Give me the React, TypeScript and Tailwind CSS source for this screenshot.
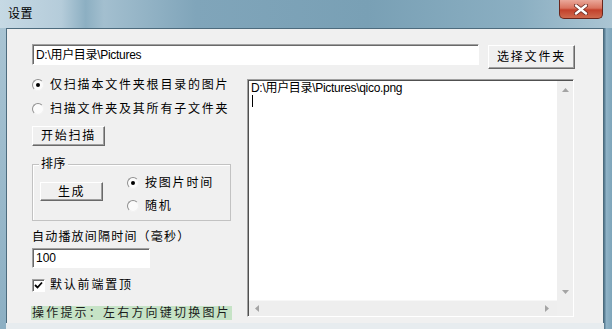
import React from 'react';

const raised =
  'border border-t-white border-l-white border-r-[#696969] border-b-[#696969] shadow-[inset_-1px_-1px_0_#a0a0a0] bg-[#f0f0f0]';
const sunken =
  'border border-t-[#a0a0a0] border-l-[#a0a0a0] border-r-white border-b-white shadow-[inset_1px_1px_0_#696969] bg-white';

function Radio({ checked }: { checked?: boolean }) {
  return (
    <span className="w-[12px] h-[12px] rounded-full border border-t-[#8f8f8f] border-l-[#8f8f8f] border-r-[#f2f2f2] border-b-[#f2f2f2] bg-[#fbfbfb] flex items-center justify-center shrink-0">
      {checked && <span className="w-[4px] h-[4px] rounded-full bg-black" />}
    </span>
  );
}

function RadioRow({ label, checked, className = '' }: { label: string; checked?: boolean; className?: string }) {
  return (
    <div className={`flex items-center h-[12px] gap-[6px] ${className}`}>
      <Radio checked={checked} />
      <span className="text-[12px] leading-[12px] tracking-[1.8px] whitespace-nowrap">{label}</span>
    </div>
  );
}

function Arrow({ dir }: { dir: 'up' | 'down' | 'left' | 'right' }) {
  const pts = {
    up: '0,4 7,4 3.5,0',
    down: '0,0 7,0 3.5,4',
    left: '4,0 4,7 0,3.5',
    right: '0,0 0,7 4,3.5',
  }[dir];
  const vertical = dir === 'up' || dir === 'down';
  return (
    <svg width={vertical ? 7 : 4} height={vertical ? 4 : 7} viewBox={vertical ? '0 0 7 4' : '0 0 4 7'}>
      <polygon points={pts} fill="#a4a4a4" />
    </svg>
  );
}

export default function App() {
  return (
    <div className="w-[612px] h-[329px] flex flex-col overflow-hidden text-black font-['Liberation_Sans','Noto_Sans_CJK_SC',sans-serif]">
      {/* title bar */}
      <div className="h-[28px] flex items-start justify-between bg-[linear-gradient(90deg,#c6d9e4_0%,#b5ccda_10%,#8cafc2_14%,#a3bfcf_17%,#80a5ba_32%,#79a0b5_60%,#8bafc2_85%,#abc5d3_100%)]">
        <span className="pl-[8px] pt-[7px] text-[12px] leading-[14px] tracking-[0.5px]">设置</span>
        <div className="mr-[9px] w-[44px] h-[19px] rounded-b-[5px] border border-t-0 border-[#6a261c] bg-[linear-gradient(180deg,#eaa89a_0%,#d9735f_45%,#c3412b_55%,#cf6a4e_100%)] flex items-center justify-center">
          <svg width="14" height="11" viewBox="0 0 14 11">
            <path d="M2 1.5 L12 9.5 M12 1.5 L2 9.5" stroke="#6a2a22" strokeWidth="4" strokeLinecap="round" />
            <path d="M2 1.5 L12 9.5 M12 1.5 L2 9.5" stroke="#ffffff" strokeWidth="2.4" strokeLinecap="round" />
          </svg>
        </div>
      </div>

      <div className="flex-1 flex min-h-0">
        <div className="w-[6px] bg-[linear-gradient(180deg,#a9c4d3_0%,#8cafc3_100%)]" />
        <div className="flex-1 flex flex-col min-w-0">
          <div className="flex-1 bg-[#f0f0f0] border border-b-0 border-[#4d6b7d] pl-[25px] pr-[28px] pt-[15px]">
            {/* path row */}
            <div className="flex items-start gap-[9px]">
              <div className={`w-[447px] h-[21px] ${sunken} flex items-center pl-[3px] text-[12px] leading-[14px] tracking-[-0.3px]`}>
                D:\用户目录\Pictures
              </div>
              <div className={`w-[87px] h-[24px] mt-[1px] ${raised} flex items-center justify-center text-[12px] tracking-[1.8px]`}>
                选择文件夹
              </div>
            </div>

            <div className="flex gap-[16px] mt-[10px]">
              {/* left column */}
              <div className="w-[199px] flex flex-col">
                <RadioRow label="仅扫描本文件夹根目录的图片" checked className="mt-0" />
                <RadioRow label="扫描文件夹及其所有子文件夹" className="mt-[12px]" />
                <div className={`mt-[11px] w-[73px] h-[20px] ${raised} flex items-center justify-center text-[12px] tracking-[1.8px]`}>
                  开始扫描
                </div>

                <div className="relative mt-[18px] h-[57px] border border-[#c2c2c2] shadow-[inset_1px_1px_0_#ffffff] flex items-start">
                  <span className="absolute -top-[8px] left-[6px] px-[2px] bg-[#f0f0f0] text-[12px] leading-[14px] tracking-[0.5px]">
                    排序
                  </span>
                  <div className={`ml-[7px] mt-[17px] w-[63px] h-[19px] ${raised} flex items-center justify-center text-[12px] tracking-[1.5px]`}>
                    生成
                  </div>
                  <div className="ml-[24px] mt-[12px] flex flex-col">
                    <RadioRow label="按图片时间" checked />
                    <RadioRow label="随机" className="mt-[11px]" />
                  </div>
                </div>

                <div className="mt-[10px] h-[12px] flex items-center text-[12px] leading-[12px] tracking-[1.2px] whitespace-nowrap">
                  自动播放间隔时间（毫秒）
                </div>
                <div className={`mt-[5px] w-[118px] h-[20px] ${sunken} flex items-center pl-[3px] text-[12px] leading-[14px]`}>
                  100
                </div>
                <div className="mt-[11px] h-[12px] flex items-center gap-[5px]">
                  <span className={`w-[13px] h-[13px] ${sunken} flex items-center justify-center shrink-0`}>
                    <svg width="9" height="9" viewBox="0 0 9 9">
                      <polyline points="1,4 3.5,6.5 8,1.5" fill="none" stroke="#000" strokeWidth="1.8" />
                    </svg>
                  </span>
                  <span className="text-[12px] leading-[12px] tracking-[1.8px]">默认前端置顶</span>
                </div>
                <div className="mt-[15px] -ml-[1px] w-[201px] h-[14px] bg-[#c6e3c6] flex items-center pl-[1px] text-[12px] leading-[14px] tracking-[2.2px] text-[#1c1c1c] whitespace-nowrap">
                  操作提示：左右方向键切换图片
                </div>
              </div>

              {/* text area */}
              <div className="w-[327px] h-[238px] border border-t-[#a0a0a0] border-l-[#a0a0a0] border-r-white border-b-white shadow-[inset_1px_1px_0_#505050] flex flex-col pl-[1px] pt-[1px]">
                <div className="flex flex-1 min-h-0">
                  <div className="flex-1 bg-white pl-[2px] pt-[1px]">
                    <div className="text-[12px] leading-[13px] tracking-[-0.3px] whitespace-nowrap">D:\用户目录\Pictures\qico.png</div>
                    <div className="ml-[1px] w-px h-[12px] bg-black" />
                  </div>
                  <div className="w-[16px] bg-[#efefef] flex flex-col justify-between items-center pt-[7px] pb-[6px]">
                    <Arrow dir="up" />
                    <Arrow dir="down" />
                  </div>
                </div>
                <div className="h-[16px] flex">
                  <div className="flex-1 bg-[#eeeeee] border-t border-[#f7f7f7] flex items-center justify-between pl-[6px] pr-[8px]">
                    <Arrow dir="left" />
                    <Arrow dir="right" />
                  </div>
                  <div className="w-[16px] bg-[#efefef]" />
                </div>
              </div>
            </div>
          </div>
          <div className="h-[6px] bg-[#e7ecef]" />
        </div>
        <div className="w-[8px] bg-[linear-gradient(90deg,#4f7389_0%,#8fb2c6_30%,#7ea5ba_100%)]" />
      </div>
    </div>
  );
}
